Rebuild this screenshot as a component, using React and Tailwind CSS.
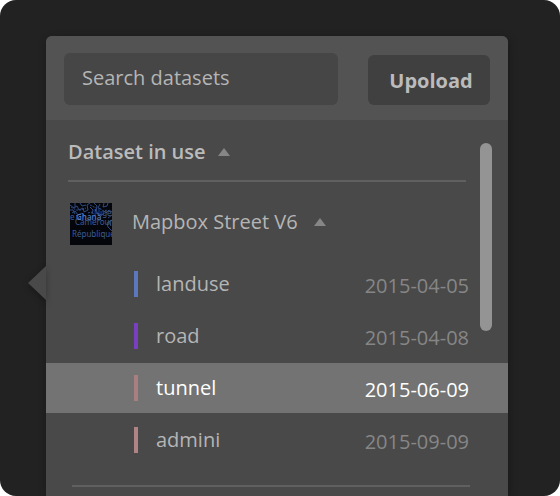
import { useState } from "react";

const LAYERS = [
  { name: "landuse", date: "2015-04-05", bar: "bg-[#5b78bd]" },
  { name: "road", date: "2015-04-08", bar: "bg-[#7840c0]" },
  { name: "tunnel", date: "2015-06-09", bar: "bg-[#a97f7f]" },
  { name: "admini", date: "2015-09-09", bar: "bg-[#b08484]" },
];

function Caret() {
  return (
    <svg width="12" height="8" viewBox="0 0 12 8" fill="#868686" aria-hidden="true">
      <path d="M6 0 12 8H0z" />
    </svg>
  );
}

function MapThumbnail() {
  return (
    <svg
      className="size-[42px] shrink-0"
      viewBox="0 0 42 42"
      aria-hidden="true"
      fontFamily="Noto Sans, sans-serif"
      fontSize="8"
      fill="#3f5c94"
    >
      <rect width="42" height="42" fill="#04060c" />
      <g fill="none" stroke="#35528c" strokeWidth="0.9">
        <path d="M0 2 4 5 7 3 9 7 13 5 14 9 18 7 17 2 20 0M2 10 5 8 8 12 12 10 15 13M10 0 12 3 16 2M20 4 23 7 22 11M24 0 27 3 26 8M30 1 28 5 31 6M34 0 33 4 37 3 38 0M36 10 39 7 42 9M0 7 3 7 5 11M38 15 42 12M42 17 37 20 38 24 42 28M39 19 41 23M5 0 5 4M26 10 32 12 36 9" />
        <path d="M1 4 6 7 11 7 16 5M18 10 21 9 24 11M20 2 26 5M32 8 38 7M6 12 9 15" strokeDasharray="2 1" />
      </g>
      <text x="24" y="13">Niger</text>
      <text x="0" y="17">e</text>
      <text x="6" y="17" fill="#4f76be" fontWeight="600">Ghana</text>
      <text x="5" y="22">Cameroun</text>
      <text x="2" y="34">République</text>
    </svg>
  );
}

function LayerRow({ layer, selected, onSelect }) {
  return (
    <li>
      <button
        type="button"
        aria-pressed={selected}
        onClick={onSelect}
        className={`flex h-[50px] w-full items-center pr-[39px] pl-[88px] text-left ${
          selected ? "bg-[#737373] text-white" : "text-[#b5b5b5]"
        }`}
      >
        <span className={`h-[26px] w-1 ${layer.bar}`} />
        <span className="ml-[18px] flex-1">{layer.name}</span>
        <span className={`pt-1 ${selected ? "text-white" : "text-[#868686]"}`}>{layer.date}</span>
      </button>
    </li>
  );
}

export default function App() {
  const [selected, setSelected] = useState("tunnel");
  const [query, setQuery] = useState("");

  return (
    <div className="bg-white">
      <div className="flex h-screen flex-col overflow-hidden rounded-2xl bg-[#222222] pt-9 pr-[52px] pl-[46px] font-['Open_Sans',sans-serif] text-[20px] leading-7 text-[#bbbbbb]">
        <main className="relative flex-1 rounded-t-[6px] bg-[#494949] shadow-[1px_2px_8px_rgba(0,0,0,0.3)]">
          <svg
            className="absolute top-[230px] -left-[18px] drop-shadow-[0_2px_3px_rgba(0,0,0,0.3)]"
            width="18"
            height="34"
            viewBox="0 0 18 34"
            fill="#494949"
            aria-hidden="true"
          >
            <path d="M18 0V34L0 17z" />
          </svg>

          <header className="flex h-[84px] items-end gap-[30px] rounded-t-[6px] bg-[#535353] px-[18px] pb-[15px]">
            <input
              type="text"
              aria-label="Search datasets"
              placeholder="Search datasets"
              value={query}
              onChange={(e) => setQuery(e.target.value)}
              className="h-[52px] min-w-0 flex-1 rounded-[6px] bg-[#464646] px-[18px] pb-1 outline-none placeholder:text-[#b5b5b5]"
            />
            <button
              type="button"
              className="h-[50px] w-[122px] rounded-[6px] bg-[#404040] pt-[2px] pl-1 font-bold text-[#bbbbbb]"
            >
              Upoload
            </button>
          </header>

          <h2 className="mr-[42px] ml-[22px] flex h-[62px] border-b-2 border-[#606060] font-semibold">
            <button type="button" aria-expanded="true" className="flex flex-1 items-center gap-3 pt-1">
              Dataset in use
              <Caret />
            </button>
          </h2>

          <button
            type="button"
            aria-expanded="true"
            className="mt-[21px] mb-[14px] flex items-center pl-6 text-[#b5b5b5]"
          >
            <MapThumbnail />
            <span className="ml-5 flex items-center gap-4 pb-1">
              Mapbox Street V6
              <Caret />
            </span>
          </button>

          <ul className="flex flex-col gap-[2px]">
            {LAYERS.map((layer) => (
              <LayerRow
                key={layer.name}
                layer={layer}
                selected={layer.name === selected}
                onSelect={() => setSelected(layer.name)}
              />
            ))}
          </ul>

          <hr className="mt-5 mr-[38px] ml-[26px] border-t-2 border-[#606060]" />

          <div className="absolute top-[107px] right-4 h-[188px] w-3 rounded-full bg-[#949494]" />
        </main>
      </div>
    </div>
  );
}
